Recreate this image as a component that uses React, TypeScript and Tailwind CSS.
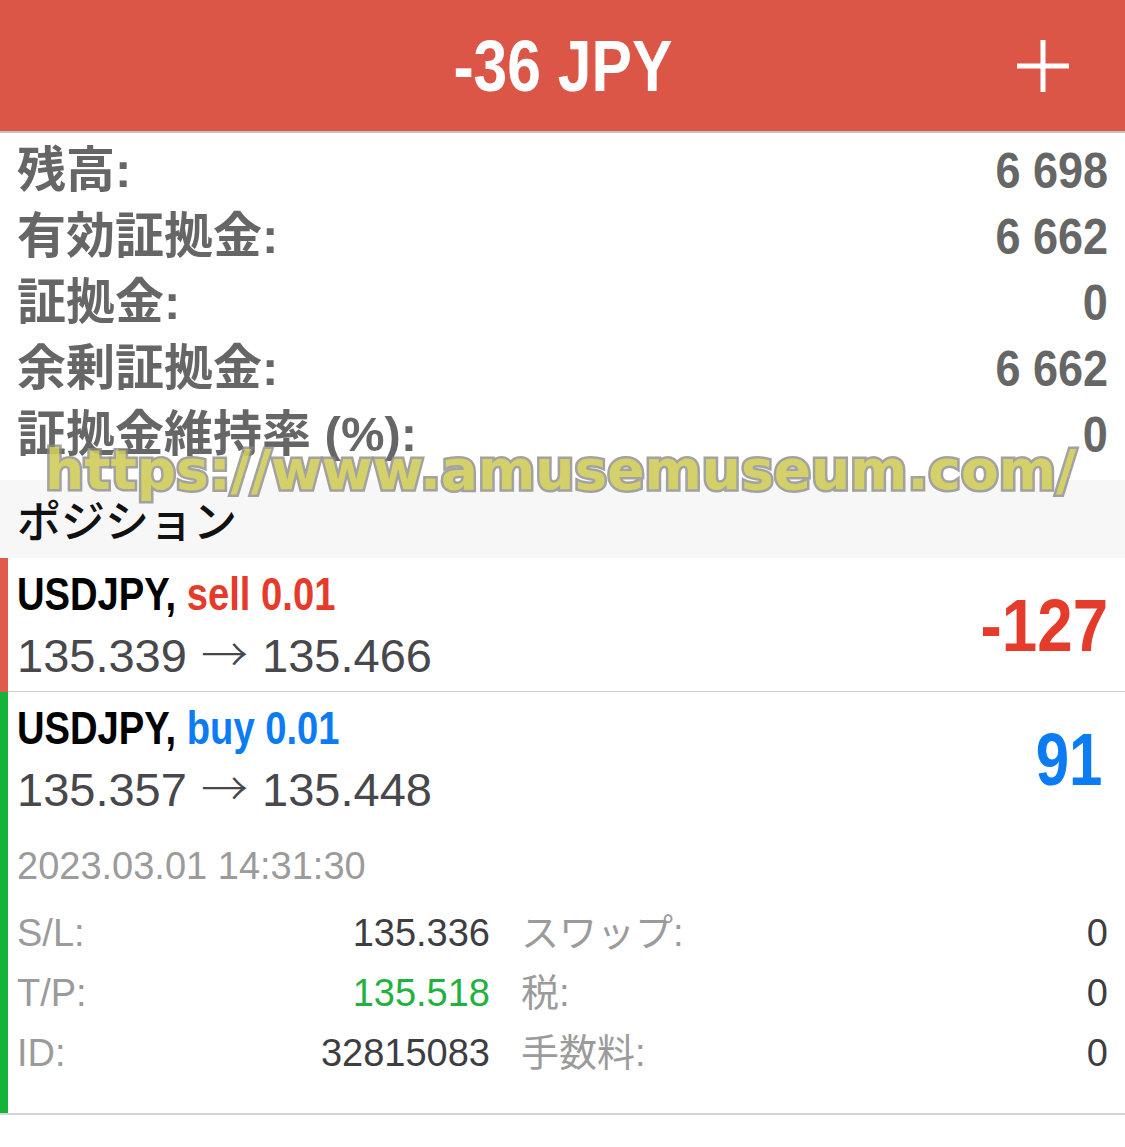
import React from "react";

const SANS = "font-['Liberation_Sans','Noto_Sans_CJK_JP',sans-serif]";
const CJK = "font-['Noto_Sans_CJK_JP',sans-serif]";

const summary: [string, string][] = [
  ["残高:", "6 698"],
  ["有効証拠金:", "6 662"],
  ["証拠金:", "0"],
  ["余剰証拠金:", "6 662"],
  ["証拠金維持率 (%):", "0"],
];

function Prices({ from, to }: { from: string; to: string }) {
  return (
    <div className={`${SANS} whitespace-nowrap text-[47px] leading-[62px] text-[#47474c]`}>
      {from}{" "}
      <span className={`${CJK} mx-[1px] inline-block font-light leading-none`}>→</span> {to}
    </div>
  );
}

function PositionHead({
  side,
  sideColor,
  from,
  to,
  amount,
  amountClass,
}: {
  side: string;
  sideColor: string;
  from: string;
  to: string;
  amount: string;
  amountClass: string;
}) {
  return (
    <div className="flex items-center justify-between pr-[17px]">
      <div className="flex flex-col">
        <div
          className={`${SANS} origin-left scale-x-[0.83] whitespace-nowrap font-bold text-[46px] leading-[62px] text-black`}
        >
          USDJPY, <span className={sideColor}>{side}</span>
        </div>
        <Prices from={from} to={to} />
      </div>
      <div
        className={`${SANS} inline-block origin-right font-bold text-[75px] leading-none ${sideColor} ${amountClass}`}
      >
        {amount}
      </div>
    </div>
  );
}

function DetailRow({
  l1,
  v1,
  v1Color,
  l2,
  v2,
}: {
  l1: string;
  v1: string;
  v1Color: string;
  l2: string;
  v2: string;
}) {
  return (
    <div className={`${SANS} flex text-[38px] leading-[60px] pr-[17px]`}>
      <div className="flex w-[473px] justify-between">
        <span className="text-[#9b9b9b]">{l1}</span>
        <span className={v1Color}>{v1}</span>
      </div>
      <div className="ml-[31px] flex flex-1 justify-between">
        <span className="text-[#9b9b9b]">{l2}</span>
        <span className="text-[#3d3d42]">{v2}</span>
      </div>
    </div>
  );
}

export default function App() {
  return (
    <div className="relative w-[1125px] h-[1147px] bg-white overflow-hidden">
      {/* Header */}
      <div className="grid h-[133px] grid-cols-[1fr_auto_1fr] items-center bg-[#dc5648] border-b-2 border-[#c4c4c4]">
        <div />
        <div
          className={`${SANS} inline-block origin-center scale-x-[0.83] whitespace-nowrap font-bold text-[73px] leading-none text-white`}
        >
          -36 JPY
        </div>
        <div className="flex justify-end pr-[55px]">
          <svg width="54" height="56" viewBox="0 0 54 56" fill="none">
            <path d="M27 2V54M1 28H53" stroke="white" strokeWidth="5" />
          </svg>
        </div>
      </div>

      {/* Summary */}
      <div className="pt-[5px] pb-[12px]">
        {summary.map(([label, value]) => (
          <div
            key={label}
            className={`${SANS} flex h-[66px] items-center justify-between pl-[17px] pr-[17px] font-bold text-[#666666]`}
          >
            <span className="text-[49px]">{label}</span>
            <span className="inline-block origin-right scale-x-[0.9] text-[50px]">{value}</span>
          </div>
        ))}
      </div>

      {/* Section header */}
      <div className="flex h-[78px] items-center bg-[#f7f7f7] pl-[17px]">
        <span className={`${CJK} font-medium text-[44px] leading-none text-[#111111]`}>ポジション</span>
      </div>

      {/* Position 1 */}
      <div className="flex">
        <div className="w-[8px] shrink-0 bg-[#e05a4d]" />
        <div className="flex-1 border-b border-[#cfcfcf] pl-[9px] pt-[5px] pb-[4px]">
          <PositionHead
            side="sell 0.01"
            sideColor="text-[#e43b2b]"
            from="135.339"
            to="135.466"
            amount="-127"
            amountClass="scale-x-[0.85]"
          />
        </div>
      </div>

      {/* Position 2 */}
      <div className="flex border-b-2 border-[#d4d4d4]">
        <div className="w-[8px] shrink-0 bg-[#16b33b]" />
        <div className="flex-1 pl-[9px] pt-[5px] pb-[30px]">
          <PositionHead
            side="buy 0.01"
            sideColor="text-[#0b7cf4]"
            from="135.357"
            to="135.448"
            amount="91"
            amountClass="scale-x-[0.8] mr-[6px]"
          />
          <div className={`${SANS} mt-[20px] text-[38px] leading-[50px] text-[#9b9b9b]`}>
            2023.03.01 14:31:30
          </div>
          <div className="mt-[12px]">
            <DetailRow l1="S/L:" v1="135.336" v1Color="text-[#3d3d42]" l2="スワップ:" v2="0" />
            <DetailRow l1="T/P:" v1="135.518" v1Color="text-[#1fb23e]" l2="税:" v2="0" />
            <DetailRow l1="ID:" v1="32815083" v1Color="text-[#3d3d42]" l2="手数料:" v2="0" />
          </div>
        </div>
      </div>

      {/* Watermark */}
      <div className="pointer-events-none absolute left-[45px] top-[443px] whitespace-nowrap font-['DejaVu_Sans',sans-serif] font-bold text-[55px] leading-none text-[#d0cc5a] opacity-90 [-webkit-text-stroke:5px_rgba(135,135,135,0.85)] [paint-order:stroke_fill]">
        https://www.amusemuseum.com/
      </div>
    </div>
  );
}
